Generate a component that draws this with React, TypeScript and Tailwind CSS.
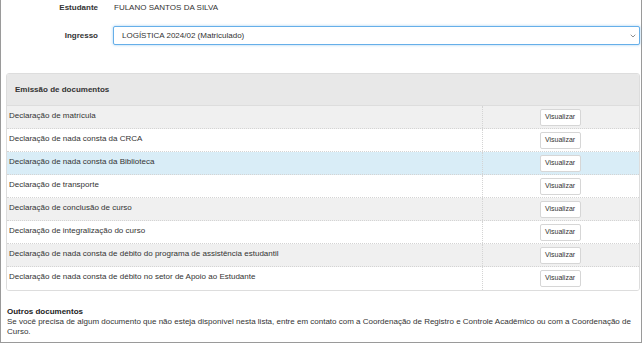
import { ChevronDown } from "lucide-react";

const docs = [
  "Declaração de matrícula",
  "Declaração de nada consta da CRCA",
  "Declaração de nada consta da Biblioteca",
  "Declaração de transporte",
  "Declaração de conclusão de curso",
  "Declaração de integralização do curso",
  "Declaração de nada consta de débito do programa de assistência estudantil",
  "Declaração de nada consta de débito no setor de Apoio ao Estudante",
];

function rowBg(i: number) {
  if (i === 2) return "bg-[#d9edf7]";
  if (i % 2 === 0) return "bg-[#f0f0f0]";
  return "bg-white";
}

export default function App() {
  return (
    <div className="h-[344px] w-[644px] bg-white font-['Liberation_Sans',Arial,sans-serif] text-[8px] text-[#333]">
      <div className="h-[343px] w-[642px] border-x border-b border-[#9a9a9a]">
        <div className="flex h-[16px] items-center">
          <div className="w-[97px] text-right font-bold">Estudante</div>
          <div className="pl-[16px]">FULANO SANTOS DA SILVA</div>
        </div>

        <div className="mt-[10px] flex h-[19px] items-center">
          <div className="w-[97px] text-right font-bold">Ingresso</div>
          <div className="ml-[15px] flex h-[19px] w-[527px] items-center justify-between rounded-[2px] border border-[#66afe9] bg-white pl-[8px] pr-[2px] shadow-[0_0_3px_rgba(102,175,233,0.6)]">
            <span>LOGÍSTICA 2024/02 (Matriculado)</span>
            <ChevronDown size={8} strokeWidth={2} className="text-[#555]" />
          </div>
        </div>

        <div className="ml-[5px] mt-[28px] w-[634px] overflow-hidden rounded-[3px] border border-[#dddddd]">
          <div className="flex h-[32px] items-center border-b border-[#dddddd] bg-[#e8e8e8] pl-[8px] font-bold">
            Emissão de documentos
          </div>
          {docs.map((d, i) => (
            <div
              key={d}
              className={`flex h-[23px] border-b border-dotted border-[#d4d4d4] last:border-b-0 ${rowBg(i)}`}
            >
              <div className="w-[476px] border-r border-dotted border-[#d4d4d4] pl-[2px] pt-[5px] leading-[10px]">
                {d}
              </div>
              <div className="flex flex-1 items-center justify-center pr-[2px]">
                <button className="h-[17px] w-[41px] rounded-[2px] border border-[#d6d6d6] bg-white text-[7px] text-[#333]">
                  Visualizar
                </button>
              </div>
            </div>
          ))}
        </div>

        <div className="mt-[16px] px-[6px] leading-[10px]">
          <div className="font-bold text-[#222]">Outros documentos</div>
          <p>
            Se você precisa de algum documento que não esteja disponível nesta lista, entre em contato com a
            Coordenação de Registro e Controle Acadêmico ou com a Coordenação de Curso.
          </p>
        </div>
      </div>
    </div>
  );
}
